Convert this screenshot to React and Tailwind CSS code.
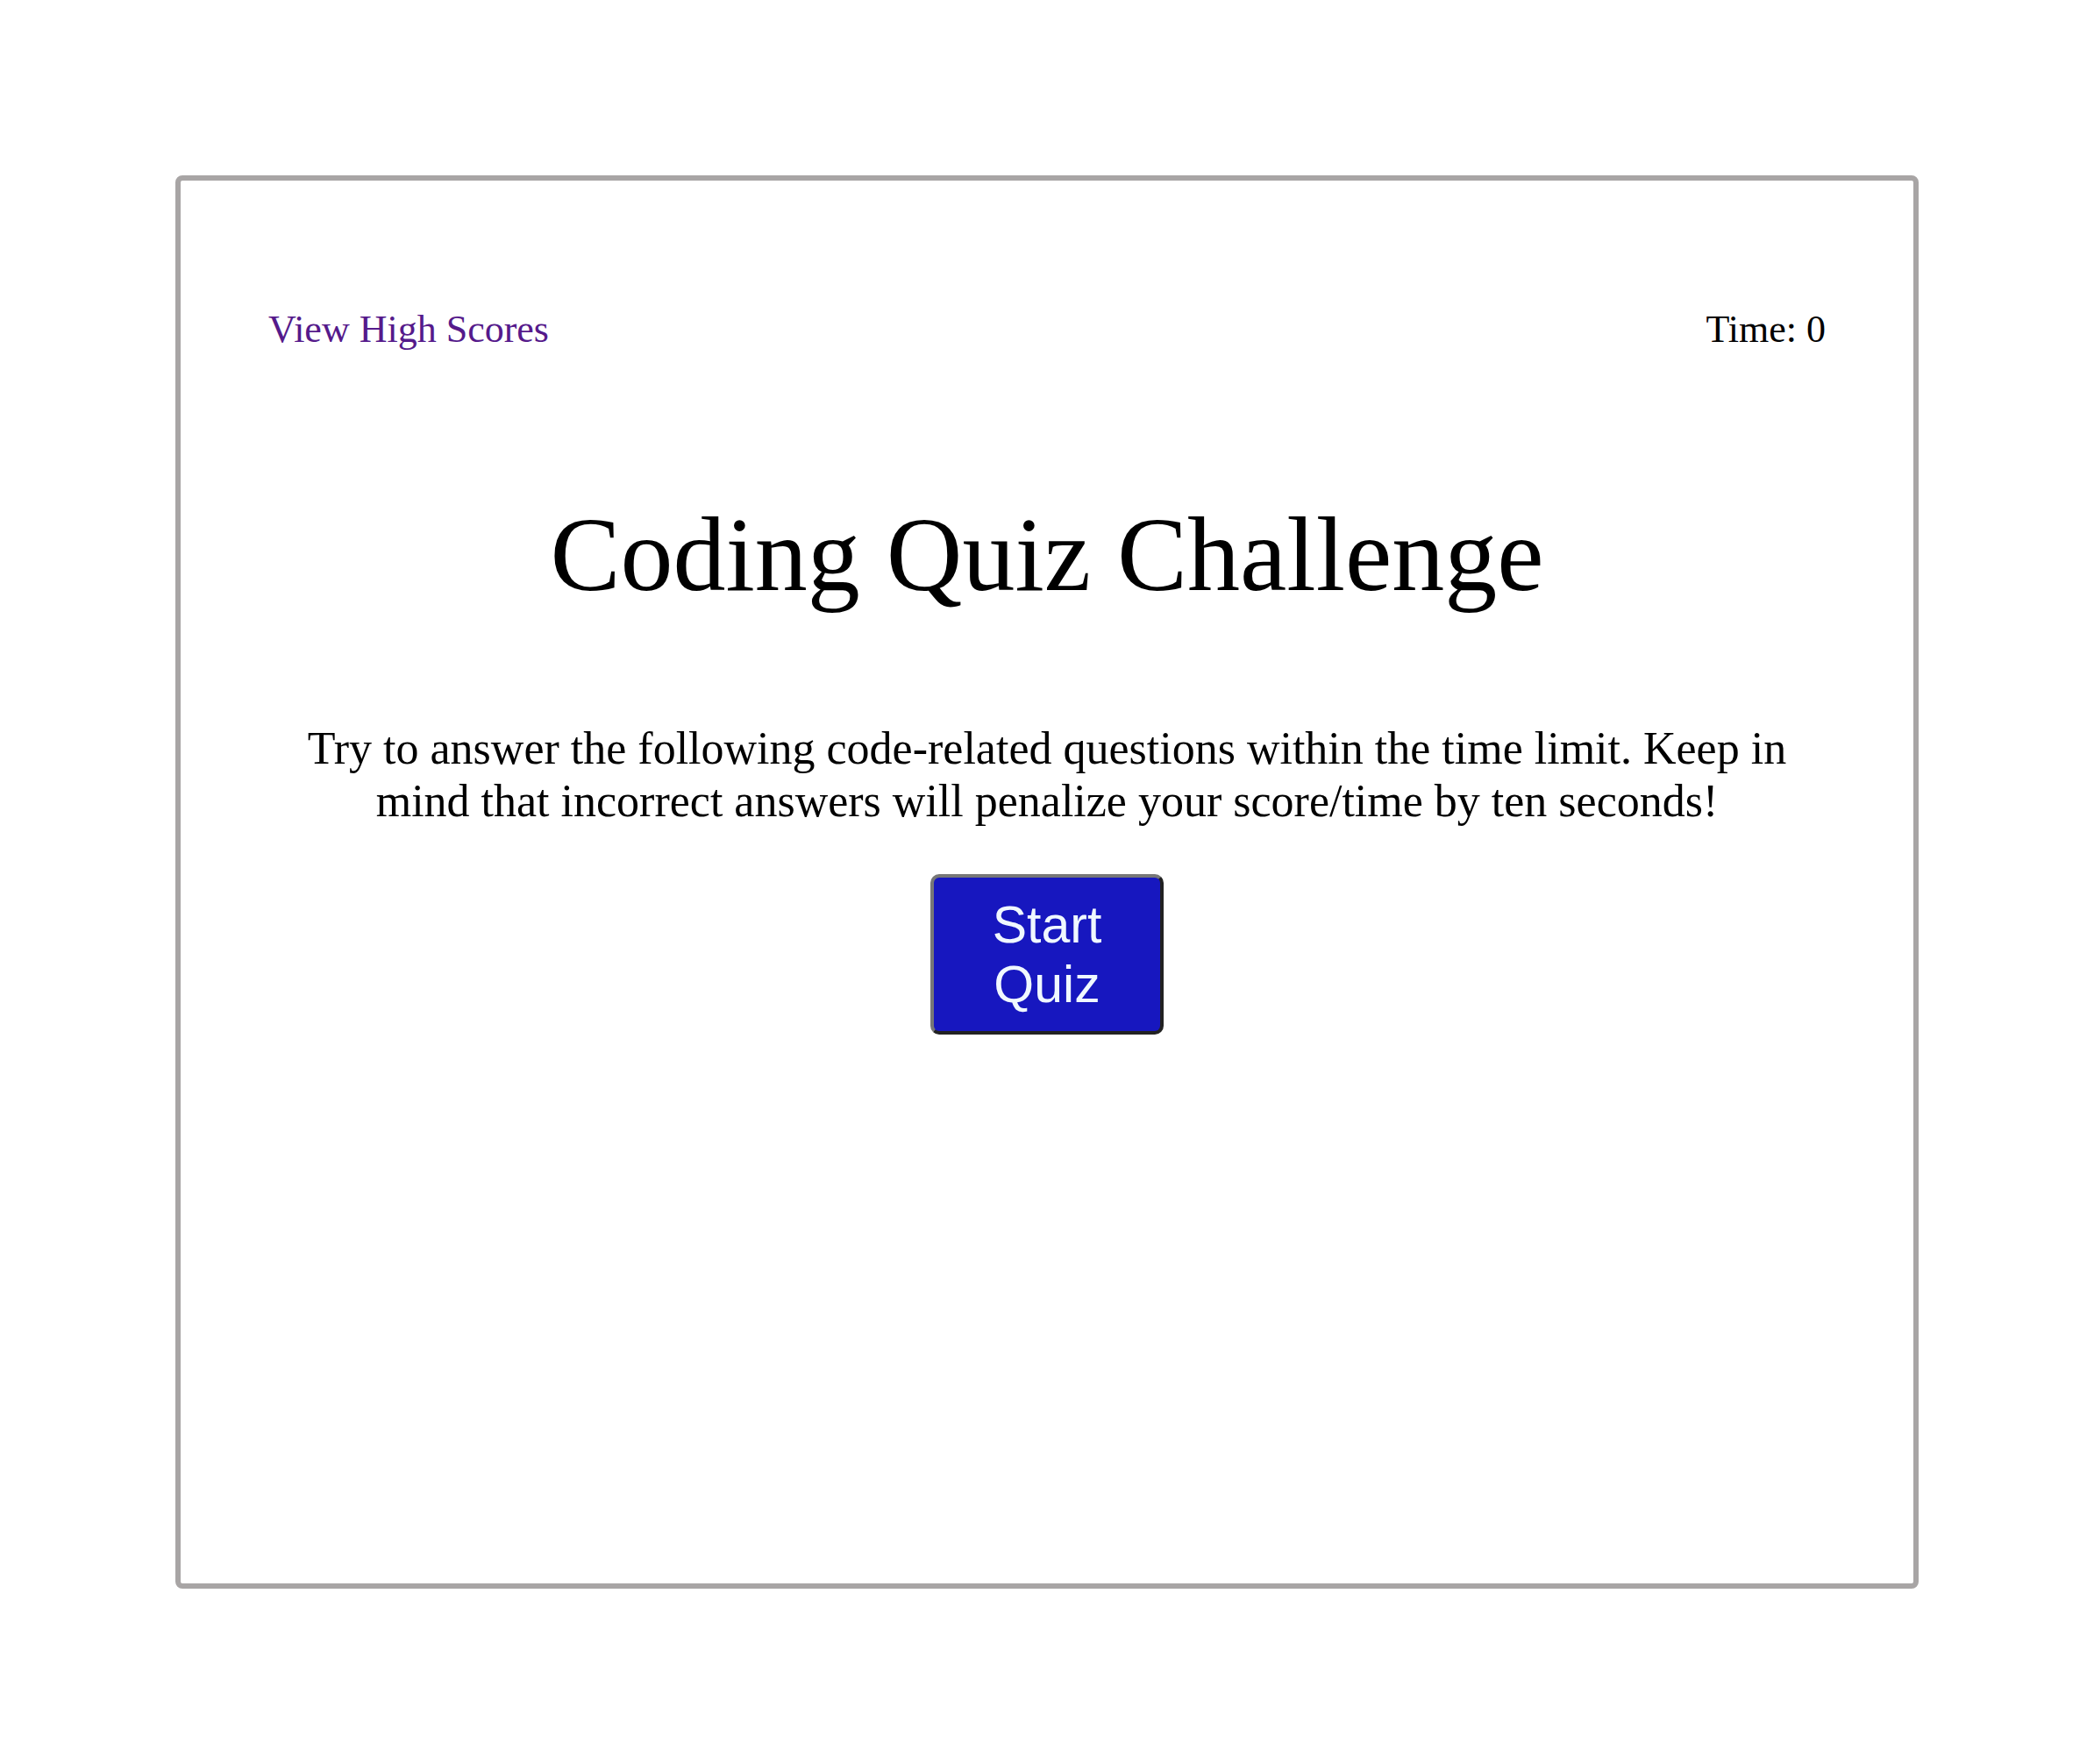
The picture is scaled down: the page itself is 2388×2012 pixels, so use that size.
export default function App() {
  return (
    <div className="w-[2388px] h-[2012px] bg-white pt-[200px] px-[200px] font-['Liberation_Serif',serif] text-black">
      <div className="h-[1612px] border-[6px] border-[#a8a5a5] rounded-[8px] flex flex-col items-center">
        <div className="w-full flex justify-between px-[100px] pt-[145px] text-[44px] leading-[50px]">
          <a href="#" className="text-[#551a8b]">View High Scores</a>
          <span>Time: 0</span>
        </div>
        <h1 className="mt-[163px] text-[120px] leading-[138px] font-normal text-center">Coding Quiz Challenge</h1>
        <p className="mt-[122px] px-[120px] w-full text-center text-[52px] leading-[60px]">
          Try to answer the following code-related questions within the time limit. Keep in mind that incorrect answers will penalize your score/time by ten seconds!
        </p>
        <button className="mt-[53px] w-[266px] h-[183px] px-[12px] py-[19px] bg-[#1717bf] text-[#f0f8ff] font-['Liberation_Sans',Arial,sans-serif] text-[59px] leading-[68px] text-center rounded-[10px] border-[4px] border-t-[#777777] border-l-[#777777] border-b-[#222222] border-r-[#222222]">
          Start Quiz
        </button>
      </div>
    </div>
  );
}
